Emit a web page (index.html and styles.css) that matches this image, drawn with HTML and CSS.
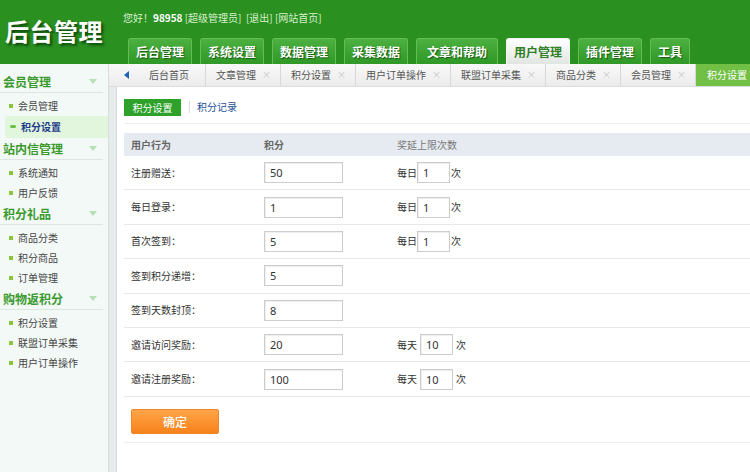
FILE: index.html
```html
<!DOCTYPE html>
<html lang="zh-CN">
<head>
<meta charset="utf-8">
<title>后台管理</title>
<link rel="stylesheet" href="styles.css">
</head>
<body>
<header class="top">
  <div class="logo">后台管理</div>
  <div class="top-right">
    <div class="greet">您好！<b>98958</b> [超级管理员] &nbsp;[退出] [网站首页]</div>
    <nav class="nav">
      <a class="nav-item">后台管理</a>
      <a class="nav-item">系统设置</a>
      <a class="nav-item">数据管理</a>
      <a class="nav-item">采集数据</a>
      <a class="nav-item wide">文章和帮助</a>
      <a class="nav-item active">用户管理</a>
      <a class="nav-item">插件管理</a>
      <a class="nav-item">工具</a>
    </nav>
  </div>
</header>
<div class="layout">
  <aside class="side">
    <div class="grp">
      <h3 class="grp-h">会员管理<i class="arr"></i></h3>
      <ul class="grp-l">
        <li>会员管理</li>
        <li class="on">积分设置</li>
      </ul>
    </div>
    <div class="grp">
      <h3 class="grp-h">站内信管理<i class="arr"></i></h3>
      <ul class="grp-l">
        <li>系统通知</li>
        <li>用户反馈</li>
      </ul>
    </div>
    <div class="grp">
      <h3 class="grp-h">积分礼品<i class="arr"></i></h3>
      <ul class="grp-l">
        <li>商品分类</li>
        <li>积分商品</li>
        <li>订单管理</li>
      </ul>
    </div>
    <div class="grp">
      <h3 class="grp-h">购物返积分<i class="arr"></i></h3>
      <ul class="grp-l">
        <li>积分设置</li>
        <li>联盟订单采集</li>
        <li>用户订单操作</li>
      </ul>
    </div>
  </aside>
  <main class="main">
    <div class="tabs">
      <span class="tab-prev"><svg width="5" height="8" viewBox="0 0 5 8"><path d="M5 0L0 4L5 8Z" fill="#1e63b8"/></svg></span>
      <span class="tab first">后台首页</span>
      <span class="tab">文章管理<i>×</i></span>
      <span class="tab">积分设置<i>×</i></span>
      <span class="tab">用户订单操作<i>×</i></span>
      <span class="tab">联盟订单采集<i>×</i></span>
      <span class="tab">商品分类<i>×</i></span>
      <span class="tab">会员管理<i>×</i></span>
      <span class="tab active">积分设置</span>
    </div>
    <div class="panel">
      <div class="subtabs">
        <span class="subtab-on">积分设置</span>
        <span class="subtab-sep"></span>
        <span class="subtab">积分记录</span>
      </div>
      <div class="grid">
        <div class="row head">
          <div class="c1">用户行为</div>
          <div>积分</div>
          <div class="light">奖延上限次数</div>
        </div>
        <div class="row">
          <div class="c1">注册赠送：</div>
          <div><input class="inp" value="50"></div>
          <div class="lim">每日<input class="inp-s" value="1">次</div>
        </div>
        <div class="row">
          <div class="c1">每日登录：</div>
          <div><input class="inp" value="1"></div>
          <div class="lim">每日<input class="inp-s" value="1">次</div>
        </div>
        <div class="row">
          <div class="c1">首次签到：</div>
          <div><input class="inp" value="5"></div>
          <div class="lim">每日<input class="inp-s" value="1">次</div>
        </div>
        <div class="row">
          <div class="c1">签到积分递增：</div>
          <div><input class="inp" value="5"></div>
          <div></div>
        </div>
        <div class="row">
          <div class="c1">签到天数封顶：</div>
          <div><input class="inp" value="8"></div>
          <div></div>
        </div>
        <div class="row">
          <div class="c1">邀请访问奖励：</div>
          <div><input class="inp" value="20"></div>
          <div class="lim">每天<input class="inp-s wide" value="10">次</div>
        </div>
        <div class="row">
          <div class="c1">邀请注册奖励：</div>
          <div><input class="inp" value="100"></div>
          <div class="lim">每天<input class="inp-s wide" value="10">次</div>
        </div>
      </div>
      <div class="actions">
        <button class="btn">确定</button>
      </div>
    </div>
  </main>
</div>
</body>
</html>
```

FILE: styles.css
```css
* { box-sizing: border-box; margin: 0; padding: 0; }
html, body { width: 750px; height: 472px; overflow: hidden; }
body {
  font-family: "Noto Sans CJK SC", "Noto Sans", sans-serif;
  font-size: 10px;
  line-height: 14px;
  color: #333;
  background: #fff;
}

/* header */
.top { height: 64px; background: #2a9121; display: flex; }
.logo {
  width: 123px;
  flex-shrink: 0;
  padding: 16px 0 0 5px;
  font-size: 24px;
  line-height: 30px;
  font-weight: bold;
  letter-spacing: 0.5px;
  color: #fff;
  text-shadow: 2px 2px 3px #0a3f06;
}
.top-right { flex: 1; min-width: 0; padding-top: 11px; }
.greet { color: #d9efcd; font-size: 10px; line-height: 14px; }
.greet b { color: #fff; }
.nav { display: flex; gap: 8px; margin: 13px 0 0 5px; }
.nav-item {
  flex-shrink: 0;
  height: 26px;
  line-height: 25px;
  padding: 0 7px;
  font-size: 12px;
  font-weight: bold;
  color: #fff;
  background: linear-gradient(#4cb040, #2f9826);
  border: 1px solid #62bd55;
  border-bottom: none;
  border-radius: 3px 3px 0 0;
  text-shadow: 1px 1px 1px #17570f;
}
.nav-item.wide { padding: 0 10px; }
.nav-item.active {
  background: linear-gradient(#ffffff, #e1e5e1);
  border-color: #f3f3f3;
  color: #2f7f25;
  text-shadow: none;
}

/* layout */
.layout { display: flex; height: 408px; }
.side {
  width: 109px;
  flex-shrink: 0;
  background: #f3f9f7;
  border-right: 1px solid #d4dedb;
  padding-top: 7px;
}
.grp-h {
  height: 22px;
  line-height: 22px;
  font-size: 12px;
  font-weight: bold;
  color: #3a9a2c;
  padding: 0 6px 0 3px;
  margin-right: 5px;
  border-bottom: 1px solid #dde6e2;
  display: flex;
  justify-content: space-between;
  align-items: center;
}
.arr {
  width: 0; height: 0;
  border-top: 5px solid #b6e0b4;
  border-left: 4px solid transparent;
  border-right: 4px solid transparent;
}
.grp-l { list-style: none; padding-top: 3px; }
.grp-l li {
  height: 20px;
  line-height: 20px;
  padding-left: 18px;
  position: relative;
  color: #444;
}
.grp-l li::before {
  content: "";
  position: absolute;
  left: 9px; top: 8px;
  width: 4px; height: 4px;
  background: #8cc43c;
}
.grp-l li.on {
  height: 22px;
  line-height: 22px;
  margin-left: 5px;
  padding-left: 16px;
  background: #e2f6de;
  border-radius: 3px 0 0 3px;
  font-weight: bold;
  color: #1c3a8a;
}
.grp-l li.on::before { left: 5px; top: 9px; width: 6px; height: 3px; border-radius: 2px; background: #6cc04a; }

.main {
  flex: 1;
  min-width: 0;
  background: #e6ebeb;
  display: flex;
  flex-direction: column;
  overflow: hidden;
}

/* tab strip */
.tabs {
  height: 23px;
  flex-shrink: 0;
  display: flex;
  align-items: stretch;
  background: linear-gradient(#f8f8f8, #ececec);
  border-bottom: 1px solid #dddddd;
  white-space: nowrap;
  color: #555;
  overflow: hidden;
}
.tab-prev { width: 30px; flex-shrink: 0; display: flex; align-items: center; padding-left: 15px; }
.tab {
  flex-shrink: 0;
  display: flex;
  align-items: center;
  padding: 0 11px 0 10px;
  border-right: 1px solid #d8d8d8;
}
.tab.first { padding-right: 16px; }
.tab i {
  font-style: normal;
  display: inline-block;
  width: 7px;
  margin-left: 6px;
  color: #c4c4c4;
  font-size: 9px;
}
.tab.active {
  background: #72bf46;
  color: #fff;
  border-right: none;
  padding-left: 11px;
  flex: 1 0 auto;
}

/* panel */
.panel {
  flex: 1;
  margin-left: 7px;
  background: #fff;
  border-left: 1px solid #d3dada;
  padding: 12px 0 0 7px;
}
.subtabs {
  display: flex;
  align-items: center;
  height: 25px;
  padding-bottom: 8px;
  border-bottom: 1px solid #eeeeee;
}
.subtab-on {
  width: 57px;
  height: 17px;
  line-height: 17px;
  text-align: center;
  background: #2ea12a;
  color: #fff;
}
.subtab-sep { width: 1px; height: 12px; background: #dddddd; margin: 0 7px 0 8px; }
.subtab { color: #1c4e9a; }

.grid { margin-top: 9px; }
.row {
  display: grid;
  grid-template-columns: 140px 133px 1fr;
  align-items: center;
  height: 34.4px;
  border-bottom: 1px solid #e8e8e8;
}
.row.head {
  height: 23px;
  background: #e5ebf1;
  border-bottom: none;
  color: #666;
  font-weight: bold;
}
.row.head .light { font-weight: normal; color: #777; }
.c1 { padding-left: 7px; }
.inp {
  width: 79px;
  height: 21px;
  border: 1px solid #cccccc;
  box-shadow: inset 1px 1px 1px #eeeeee;
  padding: 0 5px;
  font-family: "Noto Sans", "Noto Sans CJK SC", sans-serif;
  font-size: 11px;
  color: #333;
  outline: none;
}
.lim { display: flex; align-items: center; }
.inp-s {
  width: 33px;
  height: 21px;
  margin: 0 1px 0 0;
  border: 1px solid #cccccc;
  box-shadow: inset 1px 1px 1px #eeeeee;
  padding: 0 5px;
  font-family: "Noto Sans", "Noto Sans CJK SC", sans-serif;
  font-size: 11px;
  color: #333;
  outline: none;
}
.inp-s.wide { margin: 0 3px 0 3px; }

.actions {
  padding: 12px 0 8px 7px;
  border-bottom: 1px solid #eeeeee;
}
.btn {
  width: 88px;
  height: 25px;
  border: 1px solid #f0862a;
  border-radius: 2px;
  background: linear-gradient(#ffa548, #f7821c);
  color: #fff;
  font-family: "Noto Sans CJK SC", sans-serif;
  font-size: 12px;
  font-weight: 500;
}
```
